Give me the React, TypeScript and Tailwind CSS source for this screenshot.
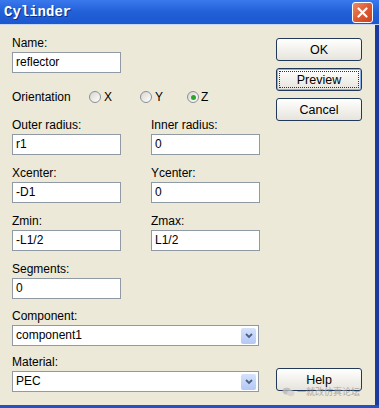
import { ReactNode } from "react";

const font = "font-['Liberation_Sans',Arial,sans-serif] text-[12px] text-black";

const TextBox = ({ value, width = "w-[109px]" }: { value: string; width?: string }) => (
  <div
    className={`${width} mt-[2px] h-[21px] border border-[#8f9aa5] bg-white pl-[3px] leading-[19px]`}
  >
    {value}
  </div>
);

const Field = ({ label, value }: { label: string; value: string }) => (
  <div className="flex flex-col">
    <span className="h-[14px] leading-[14px]">{label}</span>
    <TextBox value={value} />
  </div>
);

const Radio = ({ checked }: { checked?: boolean }) => (
  <span className="flex h-[12px] w-[12px] items-center justify-center rounded-full border border-[#8a8f96] bg-gradient-to-br from-[#d8d6cc] to-white">
    {checked && <span className="h-[5px] w-[5px] rounded-full bg-[#2aa52a]" />}
  </span>
);

const Select = ({ value }: { value: string }) => (
  <div className="mt-[2px] flex h-[21px] w-[247px] items-center border border-[#8f9aa5] bg-white pl-[3px] pr-[2px]">
    <span className="flex-1 leading-[19px]">{value}</span>
    <span className="flex h-[16px] w-[15px] items-center justify-center rounded-[2px] bg-gradient-to-b from-[#d6e2fb] to-[#b3c8f5]">
      <svg width="8" height="6" viewBox="0 0 8 6">
        <path d="M1 1 L4 4 L7 1" fill="none" stroke="#4d6185" strokeWidth="1.8" />
      </svg>
    </span>
  </div>
);

const XpButton = ({ children, focused }: { children: ReactNode; focused?: boolean }) => (
  <div
    className={`flex h-[23px] w-[86px] rounded-[3px] border border-[#23395a] bg-gradient-to-b from-white to-[#e6e4dc] p-[2px] ${
      focused ? "shadow-[inset_0_0_0_1px_#8eb0ea]" : ""
    }`}
  >
    <div
      className={`flex flex-1 items-center justify-center border leading-[14px] ${
        focused ? "border-dotted border-[#333]" : "border-transparent"
      } text-[12.5px]`}
    >
      {children}
    </div>
  </div>
);

export default function App() {
  return (
    <div className={`flex h-[408px] w-[379px] flex-col overflow-hidden bg-[#ece9d8] ${font}`}>
      {/* title bar */}
      <div className="flex h-[25px] items-center border-b border-[#c9d6f2] bg-gradient-to-b from-[#3a78ee] via-[#2160d8] to-[#1c58d0] pl-[4px] pr-[6px]">
        <span className="flex-1 font-['Liberation_Mono',monospace] text-[14px] font-bold text-white [text-shadow:1px_1px_0_#0b2f8a]">
          Cylinder
        </span>
        <span className="flex h-[21px] w-[21px] items-center justify-center rounded-[3px] border border-white bg-gradient-to-br from-[#ec8a66] via-[#de5a33] to-[#c9431d]">
          <svg width="11" height="11" viewBox="0 0 11 11">
            <path d="M1.5 1.5 L9.5 9.5 M9.5 1.5 L1.5 9.5" stroke="white" strokeWidth="2.2" strokeLinecap="round" />
          </svg>
        </span>
      </div>

      {/* body */}
      <div className="flex flex-1">
        <div className="flex flex-1 flex-col pl-[12px] pt-[11px]">
          <Field label="Name:" value="reflector" />

          <div className="mt-[16px] flex h-[16px] items-center">
            <span className="w-[77px]">Orientation</span>
            <span className="flex w-[51px] items-center gap-[3px]">
              <Radio /> X
            </span>
            <span className="flex w-[47px] items-center gap-[3px]">
              <Radio /> Y
            </span>
            <span className="flex items-center gap-[2px]">
              <Radio checked /> Z
            </span>
          </div>

          <div className="mt-[13px] grid grid-cols-[109px_109px] gap-x-[30px] gap-y-[11px]">
            <Field label="Outer radius:" value="r1" />
            <Field label="Inner radius:" value="0" />
            <Field label="Xcenter:" value="-D1" />
            <Field label="Ycenter:" value="0" />
            <Field label="Zmin:" value="-L1/2" />
            <Field label="Zmax:" value="L1/2" />
            <Field label="Segments:" value="0" />
          </div>

          <div className="mt-[10px] flex flex-col">
            <span className="h-[14px] leading-[14px]">Component:</span>
            <Select value="component1" />
          </div>
          <div className="mt-[9px] flex flex-col">
            <span className="h-[14px] leading-[14px]">Material:</span>
            <Select value="PEC" />
          </div>
        </div>

        <div className="relative mr-[13px] flex w-[86px] flex-col gap-[7px] pb-[14px] pt-[13px]">
          <XpButton>OK</XpButton>
          <XpButton focused>Preview</XpButton>
          <XpButton>Cancel</XpButton>
          <div className="mt-auto">
            <XpButton>Help</XpButton>
          </div>
          <div className="absolute bottom-[8px] left-[6px] flex items-center gap-[2px] text-[#9a9a9a] opacity-80">
            <svg width="13" height="10" viewBox="0 0 14 11">
              <ellipse cx="5" cy="4.5" rx="4.5" ry="3.8" fill="#b8b8b8" />
              <ellipse cx="9.5" cy="7" rx="4" ry="3.3" fill="#d0d0d0" />
            </svg>
            <span className="font-['Noto_Sans_CJK_SC',sans-serif] text-[9px] leading-[10px]">一就改仿真论坛</span>
          </div>
        </div>

        <div className="w-[4px] bg-[#1a3a9c]" />
      </div>

      <div className="h-[3px] bg-[#2253c4]" />
    </div>
  );
}
